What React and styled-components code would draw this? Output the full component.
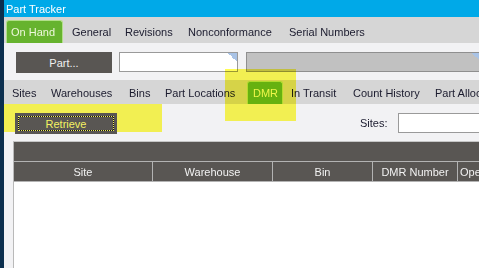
import React from 'react';
import styled, { createGlobalStyle, css } from 'styled-components';

const Global = createGlobalStyle`
  html, body { margin: 0; padding: 0; width: 479px; height: 268px; overflow: hidden; background: #f2f2f4; }
  body { font-family: "Liberation Sans", Arial, sans-serif; font-size: 11px; }
`;

const Screen = styled.div`
  position: relative;
  display: flex;
  width: 479px;
  height: 268px;
  overflow: hidden;
`;

const Desktop = styled.div`
  flex: none;
  width: 4px;
  background: #0c2f4e;
`;

const Win = styled.div`
  flex: 1;
  min-width: 0;
  display: flex;
  flex-direction: column;
  background: #f2f2f4;
  overflow: hidden;
`;

const TitleBar = styled.div`
  flex: none;
  height: 17px;
  display: flex;
  align-items: center;
  padding-left: 2px;
  background: #00a9e8;
  color: #ffffff;
`;

const TabBar = styled.div`
  flex: none;
  height: ${p => p.h}px;
  display: flex;
  align-items: flex-end;
  padding-left: ${p => p.pl}px;
  background: #d6d6d6;
  white-space: nowrap;
`;

const Tab = styled.div`
  flex: none;
  box-sizing: border-box;
  width: ${p => p.w}px;
  height: ${p => p.th}px;
  padding-left: ${p => p.pl}px;
  display: flex;
  align-items: center;
  color: #1b1b2e;
  ${p => p.active && css`
    background: #66b32e;
    border: 1px solid #b2df8a;
    border-bottom: none;
    border-radius: 3px 3px 0 0;
    color: #eef8dc;
  `}
`;

const Strip = styled.div`
  flex: none;
  height: ${p => p.h}px;
  box-sizing: border-box;
  display: flex;
  align-items: flex-start;
  padding: 9px 0 0 ${p => p.pl}px;
  white-space: nowrap;
`;

const DarkButton = styled.div`
  position: relative;
  z-index: 2;
  flex: none;
  box-sizing: border-box;
  width: ${p => p.w}px;
  height: 21px;
  display: flex;
  align-items: center;
  justify-content: center;
  background: #595653;
  color: #f0f0f0;
  ${p => p.focused && css`
    padding: 3px;
    color: #f4f262;
  `}
`;

const FocusRect = styled.div`
  flex: 1;
  align-self: stretch;
  display: flex;
  align-items: center;
  justify-content: center;
  border: 1px dotted #f0ee5a;
  background: linear-gradient(#595653, #595653) padding-box, #111111;
`;

const Field = styled.div`
  position: relative;
  flex: none;
  box-sizing: border-box;
  width: ${p => p.w}px;
  height: 20px;
  margin-left: ${p => p.ml}px;
  border: 1px solid ${p => (p.disabled ? '#8f8f8f' : '#9a9a9a')};
  background: ${p => (p.disabled ? '#c1c1c1' : '#ffffff')};
  ${p => p.corner && css`
    &::after {
      content: '';
      position: absolute;
      top: 0;
      right: 0;
      width: 9px;
      height: 9px;
      background: linear-gradient(to bottom left, #a9c3e6 50%, transparent 50%);
    }
  `}
`;

const Label = styled.div`
  flex: none;
  height: 20px;
  display: flex;
  align-items: center;
  margin-left: ${p => p.ml}px;
  color: #1b1b2e;
`;

const Grid = styled.div`
  flex: 1;
  display: flex;
  flex-direction: column;
  margin-left: 9px;
  width: 520px;
  border-top: 1px solid #c6c6c6;
  border-left: 1px solid #b9b9b9;
  background: #ffffff;
`;

const GroupBand = styled.div`
  flex: none;
  height: 19px;
  background: #595653;
`;

const HeaderRow = styled.div`
  flex: none;
  display: flex;
  height: 19px;
  border-top: 1px solid #b3b3b3;
  border-bottom: 1px solid #b3b3b3;
  background: #595653;
`;

const HeaderCell = styled.div`
  flex: none;
  box-sizing: border-box;
  width: ${p => p.w}px;
  display: flex;
  align-items: center;
  justify-content: ${p => (p.left ? 'flex-start' : 'center')};
  padding-left: ${p => (p.left ? 2 : 0)}px;
  border-right: 1px solid #b3b3b3;
  color: #f2f2f2;
  white-space: nowrap;
  overflow: hidden;
`;

const GridBody = styled.div`
  flex: 1;
  background: #ffffff;
`;

const Highlight = styled.div`
  position: absolute;
  z-index: 1;
  left: ${p => p.x}px;
  top: ${p => p.y}px;
  width: ${p => p.w}px;
  height: ${p => p.h}px;
  background: #fffc55;
  mix-blend-mode: multiply;
  pointer-events: none;
`;

const topTabs = [
  { t: 'On Hand', w: 57, pl: 4, active: true },
  { t: 'General', w: 55, pl: 9 },
  { t: 'Revisions', w: 63, pl: 7 },
  { t: 'Nonconformance', w: 101, pl: 7 },
  { t: 'Serial Numbers', w: 100, pl: 7 },
];

const subTabs = [
  { t: 'Sites', w: 39, pl: 7 },
  { t: 'Warehouses', w: 78, pl: 7 },
  { t: 'Bins', w: 36, pl: 7 },
  { t: 'Part Locations', w: 89, pl: 7 },
  { t: 'DMR', w: 36, pl: 5, active: true },
  { t: 'In Transit', w: 63, pl: 8 },
  { t: 'Count History', w: 82, pl: 7 },
  { t: 'Part Allocations', w: 120, pl: 7 },
];

const columns = [
  { t: 'Site', w: 139 },
  { t: 'Warehouse', w: 120 },
  { t: 'Bin', w: 100 },
  { t: 'DMR Number', w: 85 },
  { t: 'Operation', w: 90, left: true },
];

export default function App() {
  return (
    <>
      <Global />
      <Screen>
        <Desktop />
        <Win>
          <TitleBar>Part Tracker</TitleBar>
          <TabBar h={26} pl={2}>
            {topTabs.map(tab => (
              <Tab key={tab.t} w={tab.w} pl={tab.pl} th={23} active={tab.active}>
                {tab.t}
              </Tab>
            ))}
          </TabBar>
          <Strip h={37} pl={12}>
            <DarkButton w={96}>Part...</DarkButton>
            <Field w={119} ml={7} corner />
            <Field w={236} ml={8} disabled corner />
          </Strip>
          <TabBar h={24} pl={1}>
            {subTabs.map(tab => (
              <Tab key={tab.t} w={tab.w} pl={tab.pl} th={23} active={tab.active}>
                {tab.t}
              </Tab>
            ))}
          </TabBar>
          <Strip h={37} pl={11}>
            <DarkButton w={102} focused>
              <FocusRect>Retrieve</FocusRect>
            </DarkButton>
            <Label ml={243}>Sites:</Label>
            <Field w={100} ml={10} />
          </Strip>
          <Grid>
            <GroupBand />
            <HeaderRow>
              {columns.map(c => (
                <HeaderCell key={c.t} w={c.w} left={c.left}>
                  {c.t}
                </HeaderCell>
              ))}
            </HeaderRow>
            <GridBody />
          </Grid>
        </Win>
        <Highlight x={225} y={69} w={71} h={52} />
        <Highlight x={4} y={104} w={158} h={28} />
      </Screen>
    </>
  );
}
